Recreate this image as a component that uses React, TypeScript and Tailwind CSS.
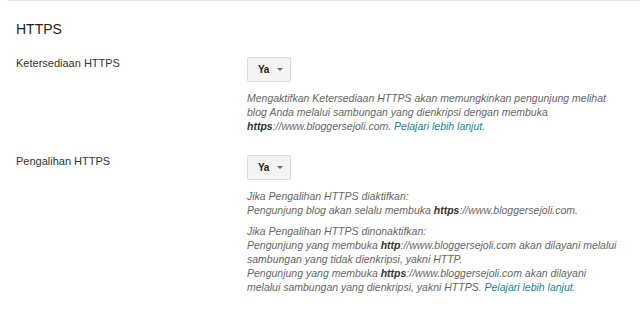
import React from 'react'

function YaButton() {
  return (
    <button className="flex h-[25px] w-[44px] items-center rounded-[2px] border border-[#dcdcdc] bg-[#f4f4f4] pl-[10px] text-[10px] leading-none font-bold tracking-[-0.4px] text-[#222]">
      Ya
      <span className="ml-[8px] h-0 w-0 border-x-[3px] border-t-[3px] border-x-transparent border-t-[#666]" />
    </button>
  )
}

function Link() {
  return <span className="text-[#1c7f92]">Pelajari lebih lanjut</span>
}

function Row({ label, children }: { label: string; children: React.ReactNode }) {
  return (
    <div className="flex">
      <div className="w-[231px] shrink-0 text-[11px] leading-[13px] text-[#333]">{label}</div>
      <div className="flex-1">{children}</div>
    </div>
  )
}

export default function App() {
  return (
    <div className="h-[309px] w-[640px] overflow-hidden bg-white font-[family-name:'Liberation_Sans',Arial,sans-serif]">
      <div className="ml-[7px] h-px bg-[#e6e6e6]" />
      <div className="px-[16px]">
        <h1 className="mt-[20px] text-[14px] leading-[16px] text-[#222]">HTTPS</h1>

        <div className="mt-[20px]">
          <Row label="Ketersediaan HTTPS">
            <YaButton />
            <p className="mt-[9px] whitespace-nowrap text-[10.5px] leading-[14px] italic text-[#666]">
              Mengaktifkan Ketersediaan HTTPS akan memungkinkan pengunjung melihat
              <br />
              blog Anda melalui sambungan yang dienkripsi dengan membuka
              <br />
              <b className="text-[#333]">https</b>://www.bloggersejoli.com. <Link />.
            </p>
          </Row>
        </div>

        <div className="mt-[22px]">
          <Row label="Pengalihan HTTPS">
            <YaButton />
            <div className="mt-[9px] whitespace-nowrap text-[10.5px] leading-[14px] italic text-[#666]">
              <p>
                Jika Pengalihan HTTPS diaktifkan:
                <br />
                Pengunjung blog akan selalu membuka <b className="text-[#333]">https</b>://www.bloggersejoli.com.
              </p>
              <p className="mt-[7px]">
                Jika Pengalihan HTTPS dinonaktifkan:
                <br />
                Pengunjung yang membuka <b className="text-[#333]">http</b>://www.bloggersejoli.com akan dilayani melalui
                <br />
                sambungan yang tidak dienkripsi, yakni HTTP.
                <br />
                Pengunjung yang membuka <b className="text-[#333]">https</b>://www.bloggersejoli.com akan dilayani
                <br />
                melalui sambungan yang dienkripsi, yakni HTTPS. <Link />.
              </p>
            </div>
          </Row>
        </div>
      </div>
    </div>
  )
}
